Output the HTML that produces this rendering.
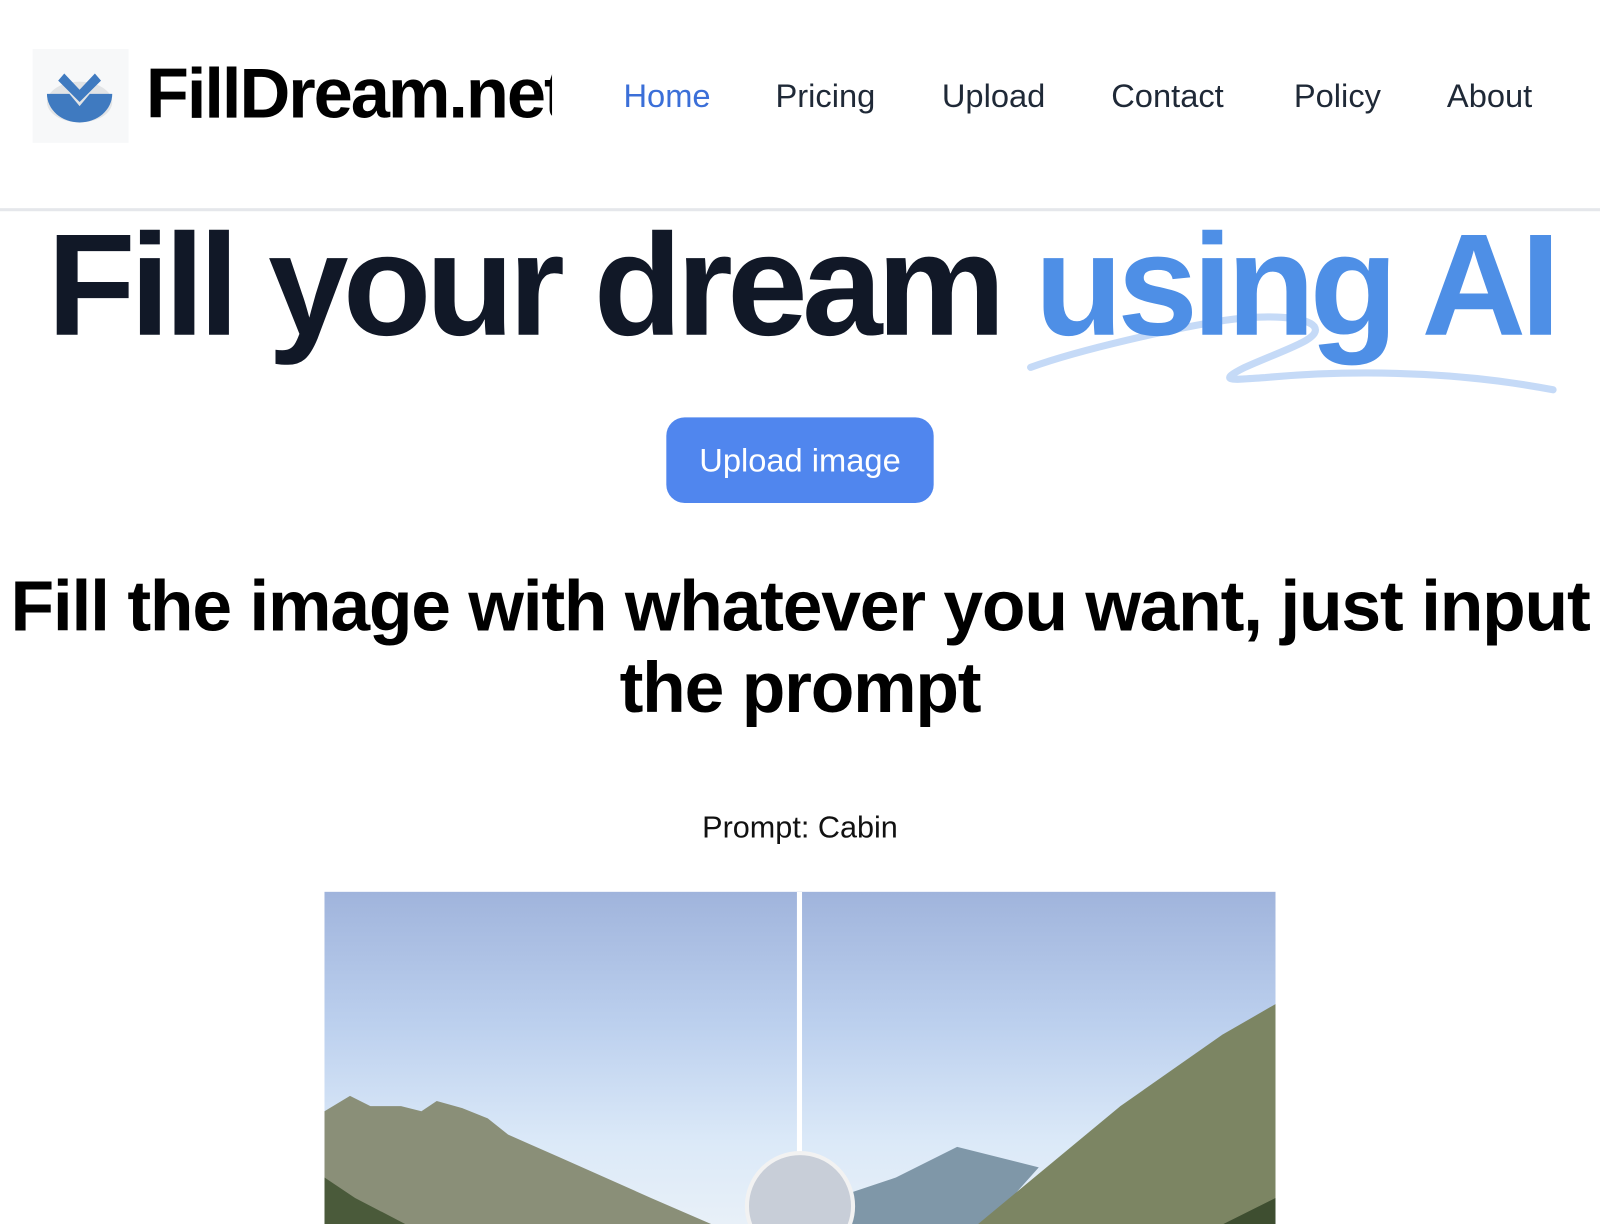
<!DOCTYPE html>
<html><head><meta charset="utf-8"><style>
*{margin:0;padding:0;box-sizing:border-box}
body{width:1600px;height:1200px;overflow:hidden;background:#fff;font-family:"Liberation Sans",sans-serif;position:relative}
#w{position:absolute;left:0;top:0;width:1568px;height:1176px;transform:scale(1.0204);transform-origin:0 0}
.logo{position:absolute;left:32px;top:48px;width:94px;height:92px;background:#f7f8f9}
.brand{position:absolute;left:143px;top:52px;font-size:69px;font-weight:bold;letter-spacing:-2px;color:#000;width:398px;overflow:hidden;white-space:nowrap}
nav a{position:absolute;top:76px;font-size:32px;color:#1f2937;text-decoration:none}
.hr{position:absolute;left:0;top:204px;width:1568px;height:3px;background:#e5e7eb}
h1{position:absolute;left:1px;width:1568px;text-align:center;top:200px;font-size:142px;letter-spacing:-5.6px;color:#111827;white-space:nowrap;line-height:160px}
h1 span{color:#4e8fe6}
.btn{position:absolute;left:653px;top:409px;width:262px;height:84px;border-radius:18px;background:#5086ee;color:#fff;font-size:32px;text-align:center;line-height:84px}
h2{position:absolute;left:0;width:1568px;top:554px;text-align:center;font-size:70px;letter-spacing:-1.2px;line-height:80px;color:#000;white-space:nowrap}
.prompt{position:absolute;left:0;width:1568px;top:795px;text-align:center;font-size:30px;color:#111}
.img{position:absolute;left:318px;top:874px;width:932px;height:326px;overflow:hidden;background:linear-gradient(#a0b4dc,#bcd0ee 40%,#dbe9f8 75%,#e8f0f8)}
</style></head><body><div id="w">
<div class="logo"><svg width="94" height="92" viewBox="0 0 94 92"><ellipse cx="46" cy="52" rx="32" ry="20" fill="#e2e4e6"/><path d="M14 44 H36 L46 56 L56 44 H78 A32 28 0 0 1 14 44Z" fill="#3f7ac0"/><path d="M25 31 L31 24 L46 40 L61 24 L67 31 L46 52Z" fill="#3f7ac0"/></svg></div>
<div class="brand">FillDream.net</div>
<nav><a style="left:611px;color:#3b6fd8">Home</a><a style="left:760px">Pricing</a><a style="left:923px">Upload</a><a style="left:1089px">Contact</a><a style="left:1268px">Policy</a><a style="left:1418px">About</a></nav>
<div class="hr"></div>
<svg style="position:absolute;left:0;top:0" width="1568" height="420"><path d="M1010 360 C1060 342 1150 322 1200 314 C1240 308 1280 310 1288 320 C1296 332 1260 342 1220 360 C1190 375 1210 372 1240 370 C1350 360 1450 368 1522 382" fill="none" stroke="#c5daf7" stroke-width="7" stroke-linecap="round"/></svg>
<h1>Fill your dream <span>using AI</span></h1>
<div class="btn">Upload image</div>
<h2>Fill the image with whatever you want, just input<br>the prompt</h2>
<div class="prompt">Prompt: Cabin</div>
<div class="img">
<svg width="932" height="326" viewBox="0 0 932 326"><path d="M0 215 L25 200 L45 210 L75 210 L95 215 L110 205 L135 212 L160 222 L180 238 L230 260 L320 300 L380 326 L0 326Z" fill="#8a8f78"/><path d="M0 280 L30 300 L80 326 L0 326Z" fill="#4a5a3a"/><path d="M500 300 L560 280 L620 250 L700 270 L650 326 L480 326Z" fill="#7f97a8"/><path d="M640 326 L780 210 L880 140 L932 110 L932 326Z" fill="#7c8563"/><path d="M880 326 L932 300 L932 326Z" fill="#3e4e30"/><rect x="463" y="0" width="5" height="326" fill="#fff"/><circle cx="466" cy="308" r="52" fill="#c8ced8" stroke="#f2f2f2" stroke-width="4"/></svg>
</div>
</div></body></html>
